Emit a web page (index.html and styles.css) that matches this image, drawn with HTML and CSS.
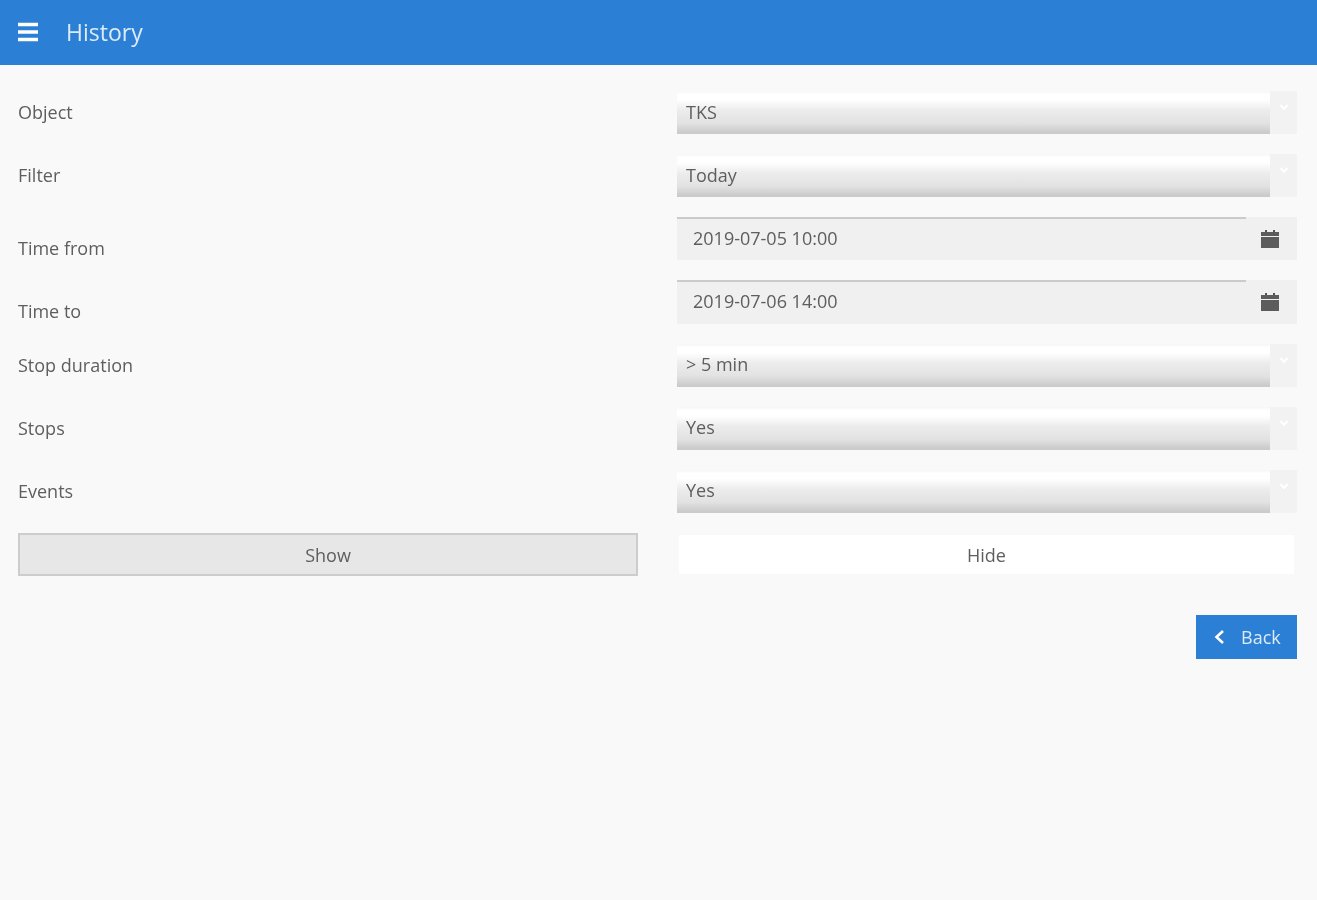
FILE: index.html
```html
<!DOCTYPE html>
<html lang="en">
<head>
<meta charset="utf-8">
<title>History</title>
<link rel="stylesheet" href="styles.css">
</head>
<body>
<header class="topbar">
  <svg class="menu-icon" width="22" height="20" viewBox="0 0 22 20" aria-hidden="true"><path d="M1 2.5h20M1 10h20M1 17.5h20" stroke="#fff" stroke-width="3.6" fill="none"/></svg>
  <h1 class="title">History</h1>
</header>
<main class="content">
  <div class="form">
    <label class="label">Object</label>
    <div class="select"><span class="select-face">TKS</span><span class="select-arrow"><svg width="10" height="7" viewBox="0 0 10 7"><path d="M1.5 1L5 5l3.5-4" stroke="#fff" stroke-width="2" fill="none"/></svg></span></div>
    <label class="label">Filter</label>
    <div class="select"><span class="select-face">Today</span><span class="select-arrow"><svg width="10" height="7" viewBox="0 0 10 7"><path d="M1.5 1L5 5l3.5-4" stroke="#fff" stroke-width="2" fill="none"/></svg></span></div>
    <label class="label label-time">Time from</label>
    <div class="date"><span class="date-value">2019-07-05 10:00</span><svg class="cal" width="18" height="18" viewBox="0 0 18 18"><path d="M4 0h2v3H4zM12 0h2v3h-2z" fill="#555"/><path d="M0 2h18v4H0zM0 7h18v11H0z" fill="#5c5c5c"/></svg></div>
    <label class="label label-time">Time to</label>
    <div class="date"><span class="date-value">2019-07-06 14:00</span><svg class="cal" width="18" height="18" viewBox="0 0 18 18"><path d="M4 0h2v3H4zM12 0h2v3h-2z" fill="#555"/><path d="M0 2h18v4H0zM0 7h18v11H0z" fill="#5c5c5c"/></svg></div>
    <label class="label">Stop duration</label>
    <div class="select"><span class="select-face">&gt; 5 min</span><span class="select-arrow"><svg width="10" height="7" viewBox="0 0 10 7"><path d="M1.5 1L5 5l3.5-4" stroke="#fff" stroke-width="2" fill="none"/></svg></span></div>
    <label class="label">Stops</label>
    <div class="select"><span class="select-face">Yes</span><span class="select-arrow"><svg width="10" height="7" viewBox="0 0 10 7"><path d="M1.5 1L5 5l3.5-4" stroke="#fff" stroke-width="2" fill="none"/></svg></span></div>
    <label class="label">Events</label>
    <div class="select"><span class="select-face">Yes</span><span class="select-arrow"><svg width="10" height="7" viewBox="0 0 10 7"><path d="M1.5 1L5 5l3.5-4" stroke="#fff" stroke-width="2" fill="none"/></svg></span></div>
    <button class="btn btn-show" type="button">Show</button>
    <button class="btn btn-hide" type="button">Hide</button>
  </div>
  <div class="actions">
    <button class="back" type="button"><svg width="12" height="16" viewBox="0 0 12 16"><path d="M10 2L3.5 8l6.5 6" stroke="#fff" stroke-width="2.6" fill="none"/></svg><span>Back</span></button>
  </div>
</main>
</body>
</html>
```
FILE: styles.css
```css
* { box-sizing: border-box; }
html, body { margin: 0; height: 100%; }
body {
  background: #f9f9f9;
  color: #5e5e5e;
  font-family: "Open Sans", sans-serif;
  font-size: 18px;
  filter: blur(0.6px);
}
.topbar {
  height: 65px;
  background: #2b7fd4;
  display: flex;
  align-items: center;
  padding: 0 0 1px 17px;
  gap: 27px;
  color: #dcebf8;
}
.title { margin: 0; font-size: 23px; font-weight: 400; }
.content { padding: 26px 20px 0 18px; }
.form {
  display: grid;
  grid-template-columns: 620px 620px;
  grid-auto-rows: 43.15px;
  column-gap: 39px;
  row-gap: 20px;
}
.label { align-self: center; padding-bottom: 1px; }
.label-time { padding: 18px 0 0; }
.select {
  display: flex;
  background: #f2f2f2;
}
.select-face {
  flex: 1;
  display: flex;
  align-items: center;
  padding: 0 0 2px 9px;
  background: linear-gradient(#f6f6f6 0, #fff 8%, #fff 20%, #ececec 45%, #e2e2e2 75%, #cbcbcb 96%);
}
.select-arrow {
  width: 27px;
  display: flex;
  justify-content: center;
  padding-top: 13px;
}
.date {
  display: flex;
  align-items: center;
  justify-content: space-between;
  background: linear-gradient(#cbcbcb, #cbcbcb) 0 0 / 569px 2px no-repeat, #f0f0f0;
  padding: 0 18px 0 16px;
}
.date-value { padding-bottom: 2px; }
.btn {
  font: inherit;
  color: inherit;
  border: 0;
  padding: 1px 0 0;
}
.btn-show { background: #e7e7e7; border: 2px solid #cdcdcd; }
.btn-hide { background: #fff; margin: 2px 3px 2px 2px; }
.actions { display: flex; justify-content: flex-end; margin-top: 39px; }
.back {
  width: 101px;
  height: 44px;
  background: #2b7fd4;
  color: #dcebf8;
  border: 0;
  font: inherit;
  display: flex;
  align-items: center;
  gap: 16px;
  padding: 0 0 0 17px;
}
```
